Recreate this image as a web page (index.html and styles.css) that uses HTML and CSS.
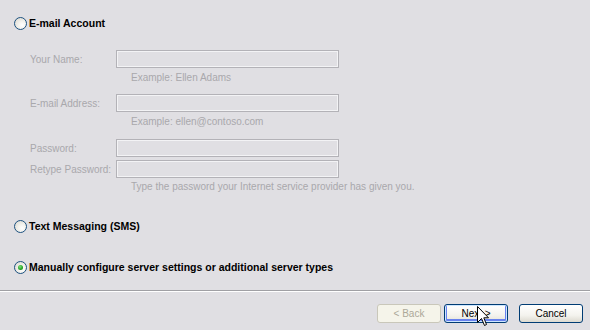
FILE: index.html
```html
<!DOCTYPE html>
<html>
<head>
<meta charset="utf-8">
<link rel="stylesheet" href="styles.css">
</head>
<body>
<div class="page">
  <div class="main">
    <label class="option opt-email">
      <span class="radio"></span>
      <span class="opt-text">E-mail Account</span>
    </label>

    <div class="fields">
      <div class="field f-name">
        <span class="flabel">Your Name:</span>
        <span class="input"></span>
      </div>
      <div class="hint h-name">Example: Ellen Adams</div>

      <div class="field f-addr">
        <span class="flabel">E-mail Address:</span>
        <span class="input"></span>
      </div>
      <div class="hint h-addr">Example: ellen@contoso.com</div>

      <div class="field f-pass">
        <span class="flabel">Password:</span>
        <span class="input"></span>
      </div>
      <div class="field f-retype">
        <span class="flabel">Retype Password:</span>
        <span class="input"></span>
      </div>
      <div class="hint h-pass">Type the password your Internet service provider has given you.</div>
    </div>

    <label class="option opt-sms">
      <span class="radio"></span>
      <span class="opt-text">Text Messaging (SMS)</span>
    </label>

    <label class="option opt-manual">
      <span class="radio checked"><span class="dot"></span></span>
      <span class="opt-text">Manually configure server settings or additional server types</span>
    </label>
  </div>

  <div class="separator"></div>

  <div class="buttons">
    <button class="btn disabled">&lt; Back</button>
    <button class="btn default">Next &gt;</button>
    <button class="btn cancel">Cancel</button>
  </div>

  <svg class="cursor" width="13" height="21" viewBox="0 0 13 21">
    <path d="M0.5 0.5 L0.5 16.5 L4.5 12.5 L7.5 19.5 L9.5 18.5 L6.8 11.8 L11.5 11.8 Z" fill="#fff" stroke="#000" stroke-width="1" stroke-linejoin="miter"/>
  </svg>
</div>
</body>
</html>
```

FILE: styles.css
```css
html, body {
  margin: 0;
  padding: 0;
}

body {
  width: 590px;
  height: 330px;
  background: #e0dfe3;
  font-family: "Liberation Sans", Arial, sans-serif;
  font-size: 10px;
  color: #000;
  overflow: hidden;
}

.page {
  position: relative;
  width: 590px;
  height: 330px;
  display: flex;
  flex-direction: column;
  white-space: nowrap;
}

.main {
  display: flex;
  flex-direction: column;
  padding-left: 14px;
}

.option {
  display: flex;
  align-items: center;
  gap: 2px;
  height: 14px;
  font-weight: bold;
  font-size: 10.5px;
}

.opt-email { margin-top: 16px; }
.opt-sms { margin-top: 25px; }
.opt-manual { margin-top: 27px; }

.radio {
  width: 11px;
  height: 11px;
  border: 1px solid #1c5180;
  border-radius: 50%;
  background: radial-gradient(circle at 65% 65%, #ffffff 0%, #f2f1ec 40%, #d6d4cb 100%);
  display: flex;
  align-items: center;
  justify-content: center;
  flex: none;
}

.radio .dot {
  width: 5px;
  height: 5px;
  border-radius: 50%;
  background: radial-gradient(circle at 40% 35%, #7de07d 0%, #21a121 60%, #0e7a0e 100%);
}

.fields {
  display: flex;
  flex-direction: column;
  padding-left: 16px;
  margin-top: 20px;
}

.field {
  display: flex;
  align-items: center;
  height: 18px;
}

.flabel {
  width: 86px;
  color: #a9a8ac;
  flex: none;
}

.input {
  width: 221px;
  height: 16px;
  border: 1px solid #b3b2b7;
  box-shadow: inset 0 0 0 1px #f3f3f5;
  background: #e0dfe3;
}

.hint {
  color: #a9a8ac;
  padding-left: 101px;
  height: 14px;
  line-height: 14px;
  margin-top: 3px;
}

.f-addr { margin-top: 9px; }
.f-pass { margin-top: 10px; }
.f-retype { margin-top: 3px; }
.h-pass { margin-top: 2px; }

.separator {
  margin-top: 16px;
  height: 1px;
  background: #a0a0a4;
  border-bottom: 1px solid #ffffff;
}

.buttons {
  display: flex;
  justify-content: flex-end;
  padding-right: 7px;
  margin-top: 12px;
}

.btn {
  width: 64px;
  height: 19px;
  padding: 0;
  font-family: "Liberation Sans", Arial, sans-serif;
  font-size: 10px;
  color: #000;
  border: 1px solid #003c74;
  border-radius: 3px;
  background: linear-gradient(#ffffff 0%, #f4f3ee 60%, #dcdad0 100%);
}

.btn.disabled {
  color: #aca899;
  border-color: #c9c7ba;
  background: #f5f4ea;
}

.btn.default {
  margin-left: 3px;
  box-shadow: inset 0 0 0 1px #cee7ff, inset 0 -1px 0 2px #6982ee;
  background: linear-gradient(#ffffff 0%, #f4f3ee 60%, #e3e1d6 100%);
}

.btn.cancel {
  margin-left: 11px;
}

.cursor {
  position: absolute;
  left: 477px;
  top: 306px;
}
```
